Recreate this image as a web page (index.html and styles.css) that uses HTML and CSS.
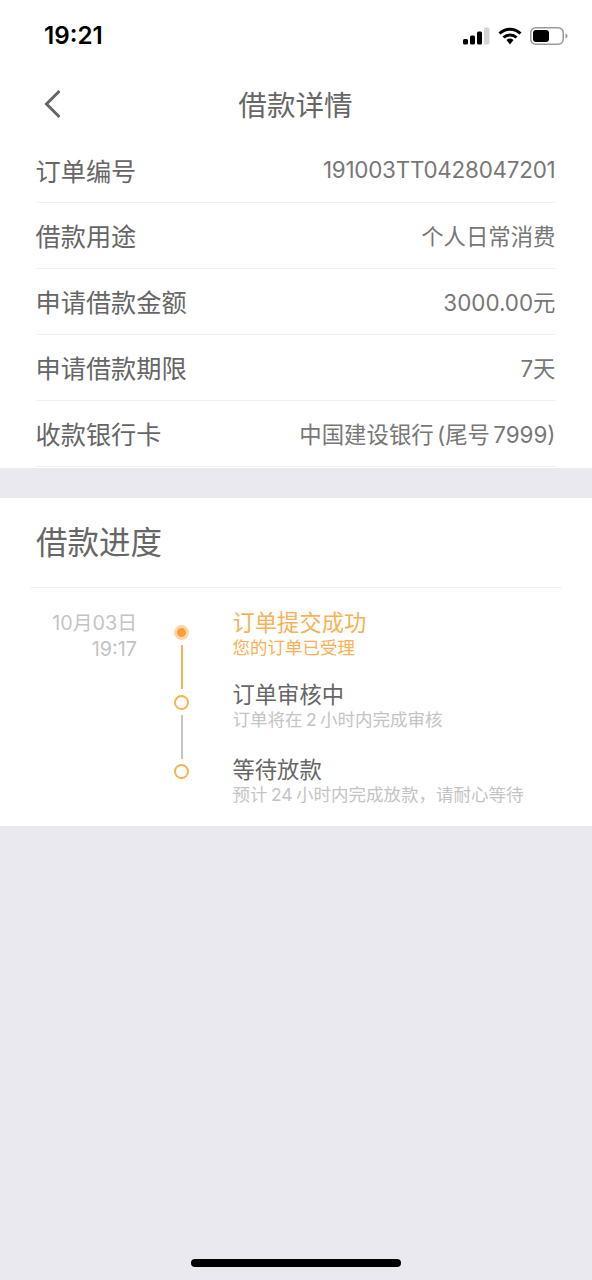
FILE: index.html
```html
<!DOCTYPE html>
<html>
<head>
    <title>借款详情</title>
    <link rel="stylesheet" href="styles.css">
</head>
<body>
    <div id="top">
        <div id="status">
            <span id="clock">19:21</span>
            <div id="status-icons">
                <svg width="27" height="18" viewBox="0 0 27 18">
                    <rect x="0" y="12" width="5" height="5.500" rx="1.500" fill="#000"/>
                    <rect x="7" y="8.500" width="5" height="9" rx="1.500" fill="#000"/>
                    <rect x="14" y="4.500" width="5" height="13" rx="1.500" fill="#000"/>
                    <rect x="21" y="0.500" width="5.500" height="17" rx="1.500" fill="#d4d4d4"/>
                </svg>
                <svg width="24" height="18" viewBox="0 0 24 18">
                    <path d="M1.500 6.500 A15 15 0 0 1 22.500 6.500" fill="none" stroke="#000" stroke-width="3"/>
                    <path d="M5.500 10.500 A9.500 9.500 0 0 1 18.500 10.500" fill="none" stroke="#000" stroke-width="3"/>
                    <path d="M8.500 13 A5 5 0 0 1 15.500 13 L12 17.500 Z" fill="#000"/>
                </svg>
                <svg width="38" height="18" viewBox="0 0 38 18">
                    <rect x="0.750" y="0.750" width="32.500" height="16.500" rx="5" fill="none" stroke="#9a9a9a" stroke-width="1.500"/>
                    <rect x="3" y="3" width="16" height="12" rx="3" fill="#000"/>
                    <path d="M35.500 6.500 C37 7 37.500 8 37.500 9 C37.500 10 37 11 35.500 11.500 Z" fill="#9a9a9a"/>
                </svg>
            </div>
        </div>
        <div id="nav">
            <svg id="back" width="20" height="30" viewBox="0 0 20 30">
                <path d="M16.500 2 L3.500 15 L16.500 28" fill="none" stroke="#666" stroke-width="3"/>
            </svg>
            <h1>借款详情</h1>
        </div>
    </div>

    <div id="details">
        <div class="row row-first"><span class="row-label">订单编号</span><span class="row-value">191003TT0428047201</span></div>
        <div class="row"><span class="row-label">借款用途</span><span class="row-value">个人日常消费</span></div>
        <div class="row"><span class="row-label">申请借款金额</span><span class="row-value">3000.00元</span></div>
        <div class="row"><span class="row-label">申请借款期限</span><span class="row-value">7天</span></div>
        <div class="row"><span class="row-label">收款银行卡</span><span class="row-value row-value-spaced">中国建设银行 (尾号 7999)</span></div>
    </div>

    <div id="progress">
        <h2>借款进度</h2>
        <div id="timeline">
            <div id="date">10月03日<br>19:17</div>
            <div id="track">
                <span class="dot dot-active"></span>
                <span class="line line-done"></span>
                <span class="dot"></span>
                <span class="line"></span>
                <span class="dot"></span>
            </div>
            <div id="steps">
                <div class="step step-active">
                    <p class="step-title">订单提交成功</p>
                    <p class="step-sub">您的订单已受理</p>
                </div>
                <div class="step">
                    <p class="step-title">订单审核中</p>
                    <p class="step-sub">订单将在 2 小时内完成审核</p>
                </div>
                <div class="step">
                    <p class="step-title">等待放款</p>
                    <p class="step-sub">预计 24 小时内完成放款，请耐心等待</p>
                </div>
            </div>
        </div>
    </div>

    <div id="home-bar"></div>
</body>
</html>
```

FILE: styles.css
```css
:root {
    --bg: #e9e9ef;
    --fg: #666;
    --orange: #fbb055;
    --soft: #c4c4c4;
    --rule: #f0f0f0;
}

* {
    box-sizing: border-box;
    font-family: Inter, "Noto Sans CJK SC", sans-serif;
}

html, body {
    margin: 0;
    height: 1280px;
    overflow: hidden;
}

body {
    display: flex;
    flex-direction: column;
    background-color: var(--bg);
    position: relative;
}

#top {
    background-color: #fff;
}

#status {
    height: 71px;
    padding: 0 24px 0 44px;
    display: flex;
    align-items: center;
    justify-content: space-between;
}

#clock {
    font-size: 24.200px;
    font-weight: 600;
    color: #000;
}

#status-icons {
    display: flex;
    align-items: center;
    gap: 8px;
}

#nav {
    height: 66px;
    padding-left: 43px;
    display: flex;
    align-items: center;
    position: relative;
}

#nav h1 {
    position: absolute;
    left: 0;
    right: 1px;
    margin: 0;
    padding-bottom: 2px;
    text-align: center;
    font-size: 28.600px;
    font-weight: normal;
    color: var(--fg);
}

#details {
    background-color: #fff;
    padding: 0 36px;
    height: 331px;
}

.row {
    height: 66px;
    padding-bottom: 2px;
    display: flex;
    align-items: center;
    justify-content: space-between;
    border-bottom: 1px solid var(--rule);
}

.row-first {
    padding-bottom: 0;
}

.row-label {
    margin-left: -0.500px;
    font-size: 25.200px;
    color: var(--fg);
}

.row-value {
    margin-right: 0.500px;
    font-size: 22.400px;
    color: #777;
}

.row-first .row-value {
    letter-spacing: -0.220px;
}

.row-value-spaced {
    word-spacing: -3px;
}

#progress {
    margin-top: 30px;
    height: 328px;
    background-color: #fff;
    padding: 0 30px;
}

#progress h2 {
    margin: 0;
    height: 90px;
    padding: 0 6px 5px;
    display: flex;
    align-items: center;
    font-size: 31.500px;
    font-weight: normal;
    color: var(--fg);
    border-bottom: 1px solid var(--rule);
}

#timeline {
    display: flex;
}

#date {
    width: 107px;
    padding-top: 21.500px;
    text-align: right;
    font-size: 19.800px;
    line-height: 26px;
    color: var(--soft);
}

#track {
    width: 16px;
    margin: 37px 0 0 36.500px;
    display: flex;
    flex-direction: column;
    align-items: center;
    gap: 5.250px;
}

.dot {
    display: block;
    flex: none;
    width: 15px;
    height: 15px;
    border: 2px solid var(--orange);
    border-radius: 50%;
    background-color: #fff;
}

.dot-active {
    border: 3px solid #fdd7aa;
    background-color: #fb9f38;
}

.line {
    display: block;
    flex: none;
    width: 2px;
    height: 44px;
    background-color: var(--soft);
}

.line-done {
    background-color: var(--orange);
}

#steps {
    margin-left: 43px;
    padding-top: 21px;
}

.step {
    height: 72px;
}

.step:nth-child(2) {
    height: 75px;
}

.step p {
    margin: 0;
}

.step-title {
    font-size: 22.300px;
    line-height: 28px;
    color: var(--fg);
}

.step-sub {
    font-size: 17.500px;
    line-height: 22px;
    word-spacing: -1.500px;
    color: var(--soft);
}

.step-active .step-title, .step-active .step-sub {
    color: var(--orange);
}

#home-bar {
    position: absolute;
    left: 191px;
    bottom: 13px;
    width: 210px;
    height: 8px;
    border-radius: 4px;
    background-color: #000;
}
```
